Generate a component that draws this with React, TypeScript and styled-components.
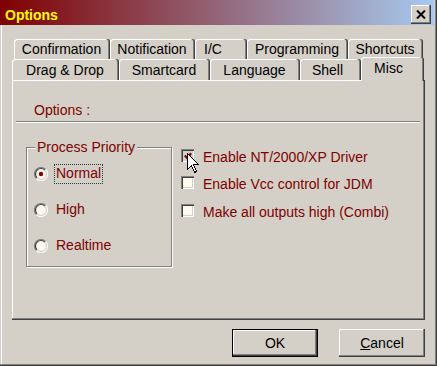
import React from "react";
import styled, { createGlobalStyle } from "styled-components";

const GlobalStyle = createGlobalStyle`
  html, body { margin: 0; padding: 0; background: #d4d0c8; }
  body { font-family: "Liberation Sans", Arial, sans-serif; font-size: 14px; }
`;

const FACE = "#d4d0c8";
const MAROON = "#800000";
const CREAM = "#fdfaf0";

const Window = styled.div`
  position: relative;
  width: 437px;
  height: 366px;
  box-sizing: border-box;
  background: ${FACE};
  display: flex;
  flex-direction: column;
  box-shadow: inset -1px -1px 0 #404040, inset -2px -2px 0 #808080,
    inset 1px 0 0 ${FACE}, inset 2px 0 0 #fff;
  overflow: hidden;
`;

const TitleBar = styled.div`
  height: 25px;
  margin-right: 3px;
  display: flex;
  align-items: flex-start;
  justify-content: space-between;
  background: linear-gradient(to right, #800000, #a6caf0);
`;

const TitleText = styled.span`
  margin: 5px 0 0 5px;
  line-height: 20px;
  font-weight: bold;
  font-size: 14px;
  color: #ffff00;
`;

const CloseButton = styled.div`
  width: 20px;
  height: 19px;
  margin: 5px 3px 0 0;
  background: ${FACE};
  display: flex;
  align-items: center;
  justify-content: center;
  box-shadow: inset -1px -1px 0 #404040, inset -2px -2px 0 #808080,
    inset 1px 1px 0 #fff;
`;

const Body = styled.div`
  padding: 14px 12px 0 12px;
  display: flex;
  flex-direction: column;
`;

const TabControl = styled.div`
  width: 413px;
  display: flex;
  flex-direction: column;
`;

const TabRow = styled.div<{ $indent: number; $h: number }>`
  display: flex;
  align-items: flex-end;
  height: ${(p) => p.$h}px;
  padding-left: ${(p) => p.$indent}px;
`;

const Tab = styled.div<{ $w: number; $pr: number; $active?: boolean; $row: number }>`
  position: relative;
  z-index: ${(p) => (p.$active ? 2 : 0)};
  box-sizing: border-box;
  width: ${(p) => p.$w}px;
  height: ${(p) => (p.$active ? 24 : p.$row === 1 ? 20 : 21)}px;
  margin-bottom: ${(p) => (p.$active ? -1 : 0)}px;
  padding-right: ${(p) => p.$pr}px;
  padding-top: ${(p) => (p.$row === 2 ? 1 : 0)}px;
  line-height: 20px;
  text-align: center;
  color: #000;
  white-space: nowrap;
  background: ${FACE};
  border-radius: 3px 3px 0 0;
  box-shadow: inset -1px 0 0 #404040, inset -2px 0 0 #808080,
    inset 1px 1px 0 #fff;
`;

const Panel = styled.div`
  height: 240px;
  box-sizing: border-box;
  padding-top: 22px;
  display: flex;
  flex-direction: column;
  box-shadow: inset -1px -1px 0 #404040, inset -2px -2px 0 #808080,
    inset 1px 1px 0 #fff;
`;

const SectionLabel = styled.div`
  margin-left: 22px;
  line-height: 16px;
  color: ${MAROON};
`;

const Separator = styled.div`
  margin: 3px 5px 0 4px;
  border-top: 1px solid #808080;
  border-bottom: 1px solid #fff;
`;

const OptionsRow = styled.div`
  display: flex;
  align-items: flex-start;
  margin: 24px 0 0 14px;
`;

const GroupBox = styled.div`
  position: relative;
  box-sizing: border-box;
  width: 146px;
  height: 120px;
  border: 1px solid #808080;
  box-shadow: 1px 1px 0 #fff, inset 1px 1px 0 #fff;
  padding: 16px 0 0 7px;
  display: flex;
  flex-direction: column;
  gap: 16px;
`;

const Legend = styled.span`
  position: absolute;
  top: -9px;
  left: 8px;
  padding: 0 2px;
  line-height: 16px;
  background: ${FACE};
  color: ${MAROON};
`;

const RadioRow = styled.div`
  display: flex;
  align-items: center;
  height: 20px;
  gap: 6px;
`;

const RadioLabel = styled.span<{ $focus?: boolean }>`
  line-height: 17px;
  padding: 0 1px 1px 1px;
  border: 1px dotted ${(p) => (p.$focus ? "#1f3f3f" : "transparent")};
  color: ${MAROON};
`;

const CheckColumn = styled.div`
  margin-left: 9px;
  display: flex;
  flex-direction: column;
`;

const CheckRow = styled.div<{ $gap: number }>`
  display: flex;
  align-items: flex-start;
  height: 20px;
  margin-top: ${(p) => p.$gap}px;
  gap: 9px;
`;

const CheckBox = styled.div<{ $pressed?: boolean }>`
  width: 13px;
  height: 13px;
  margin-top: 2px;
  flex: none;
  display: flex;
  align-items: center;
  justify-content: center;
  background: ${(p) => (p.$pressed ? FACE : CREAM)};
  box-shadow: inset 1px 1px 0 #808080, inset 2px 2px 0 #404040,
    inset -1px -1px 0 #fff, inset -2px -2px 0 ${FACE};
`;

const CheckLabel = styled.span`
  line-height: 20px;
  color: ${MAROON};
  white-space: nowrap;
`;

const ButtonRow = styled.div`
  display: flex;
  justify-content: flex-end;
  gap: 21px;
  margin-top: 9px;
`;

const Button = styled.div<{ $default?: boolean }>`
  box-sizing: border-box;
  width: 86px;
  height: 28px;
  display: flex;
  align-items: center;
  justify-content: center;
  color: #000;
  background: ${FACE};
  border: ${(p) => (p.$default ? "1px solid #000" : "none")};
  box-shadow: inset -1px -1px 0 #404040, inset -2px -2px 0 #808080,
    inset 1px 1px 0 #fff;
`;

const Cursor = styled.svg`
  position: absolute;
  left: 187px;
  top: 153px;
`;

const Radio = ({ checked }: { checked?: boolean }) => (
  <svg width="14" height="14" viewBox="0 0 14 14" style={{ flex: "none" }}>
    <circle cx="7" cy="7" r="6" fill={CREAM} />
    <path d="M2.4 11.6 A6.5 6.5 0 0 1 11.6 2.4" fill="none" stroke="#808080" strokeWidth="1.2" />
    <path d="M11.6 2.4 A6.5 6.5 0 0 1 2.4 11.6" fill="none" stroke="#ffffff" strokeWidth="1.2" />
    <path d="M3.1 10.9 A5.5 5.5 0 0 1 10.9 3.1" fill="none" stroke="#404040" strokeWidth="1.2" />
    <path d="M10.9 3.1 A5.5 5.5 0 0 1 3.1 10.9" fill="none" stroke={FACE} strokeWidth="1.2" />
    {checked && <circle cx="7" cy="7" r="2.2" fill={MAROON} />}
  </svg>
);

const row1 = [
  { label: "Confirmation", w: 96, pr: 1 },
  { label: "Notification", w: 85, pr: 1 },
  { label: "I/C", w: 52, pr: 16 },
  { label: "Programming", w: 101, pr: 1 },
  { label: "Shortcuts", w: 75, pr: 1 },
];

const row2 = [
  { label: "Drag & Drop", w: 107, pr: 1 },
  { label: "Smartcard", w: 91, pr: 1 },
  { label: "Language", w: 90, pr: 1 },
  { label: "Shell", w: 61, pr: 6 },
  { label: "Misc", w: 63, pr: 8, active: true },
];

const checks = [
  { label: "Enable NT/2000/XP Driver", checked: true, gap: 0 },
  { label: "Enable Vcc control for JDM", checked: false, gap: 7 },
  { label: "Make all outputs high (Combi)", checked: false, gap: 8 },
];

const radios = [
  { label: "Normal", checked: true },
  { label: "High", checked: false },
  { label: "Realtime", checked: false },
];

export default function App() {
  return (
    <>
      <GlobalStyle />
      <Window>
        <TitleBar>
          <TitleText>Options</TitleText>
          <CloseButton>
            <svg width="10" height="9" viewBox="0 0 10 9">
              <path d="M1 0.5 L9 8.5 M9 0.5 L1 8.5" stroke="#000" strokeWidth="2" fill="none" />
            </svg>
          </CloseButton>
        </TitleBar>
        <Body>
          <TabControl>
            <TabRow $indent={2} $h={20}>
              {row1.map((t) => (
                <Tab key={t.label} $w={t.w} $pr={t.pr} $row={1}>
                  {t.label}
                </Tab>
              ))}
            </TabRow>
            <TabRow $indent={0} $h={21}>
              {row2.map((t) => (
                <Tab key={t.label} $w={t.w} $pr={t.pr} $row={2} $active={t.active}>
                  {t.label}
                </Tab>
              ))}
            </TabRow>
            <Panel>
              <SectionLabel>Options :</SectionLabel>
              <Separator />
              <OptionsRow>
                <GroupBox>
                  <Legend>Process Priority</Legend>
                  {radios.map((r) => (
                    <RadioRow key={r.label}>
                      <Radio checked={r.checked} />
                      <RadioLabel $focus={r.checked}>{r.label}</RadioLabel>
                    </RadioRow>
                  ))}
                </GroupBox>
                <CheckColumn>
                  {checks.map((c) => (
                    <CheckRow key={c.label} $gap={c.gap}>
                      <CheckBox $pressed={c.checked}>
                        {c.checked && (
                          <svg width="8" height="8" viewBox="0 0 8 8">
                            <path d="M0.8 3.5 L3 5.8 L7.2 1.2" stroke={MAROON} strokeWidth="2.2" fill="none" />
                          </svg>
                        )}
                      </CheckBox>
                      <CheckLabel>{c.label}</CheckLabel>
                    </CheckRow>
                  ))}
                </CheckColumn>
              </OptionsRow>
            </Panel>
          </TabControl>
          <ButtonRow>
            <Button $default>OK</Button>
            <Button>
              <span>
                <u>C</u>ancel
              </span>
            </Button>
          </ButtonRow>
        </Body>
        <Cursor width="13" height="21" viewBox="0 0 13 21" shapeRendering="crispEdges">
          <path
            d="M0.5 0.5 L0.5 16.5 L4.5 12.5 L7.5 19.5 L9.5 18.5 L6.5 11.5 L11.5 11.5 Z"
            fill="#fff"
            stroke="#000"
            strokeWidth="1"
          />
        </Cursor>
      </Window>
    </>
  );
}
